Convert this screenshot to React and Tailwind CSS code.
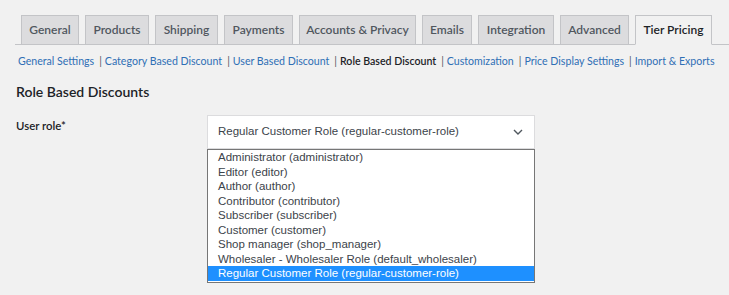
import React from 'react';

const tabs = [
  { label: 'General', w: 'w-[58px]' },
  { label: 'Products', w: 'w-[64px]' },
  { label: 'Shipping', w: 'w-[63px]' },
  { label: 'Payments', w: 'w-[69px]' },
  { label: 'Accounts & Privacy', w: 'w-[117px]' },
  { label: 'Emails', w: 'w-[50px]' },
  { label: 'Integration', w: 'w-[76px]' },
  { label: 'Advanced', w: 'w-[69px]' },
  { label: 'Tier Pricing', w: 'w-[77px]', active: true },
];

const links = [
  'General Settings',
  'Category Based Discount',
  'User Based Discount',
  'Role Based Discount',
  'Customization',
  'Price Display Settings',
  'Import & Exports',
];

const roles = [
  'Administrator (administrator)',
  'Editor (editor)',
  'Author (author)',
  'Contributor (contributor)',
  'Subscriber (subscriber)',
  'Customer (customer)',
  'Shop manager (shop_manager)',
  'Wholesaler - Wholesaler Role (default_wholesaler)',
  'Regular Customer Role (regular-customer-role)',
];

export default function App() {
  const selected = 'Regular Customer Role (regular-customer-role)';

  return (
    <div className="min-h-[295px] bg-[#f1f1f1] font-['Segoe_UI',Lato,sans-serif] text-[#1d2327]">
      <div className="pl-[15px] pt-[15px]">
        {/* Tabs */}
        <nav className="flex gap-[6px] border-b border-[#c3c4c7] pl-[6px]">
          {tabs.map((t) => (
            <div
              key={t.label}
              className={`${t.w} -mb-px flex h-[30px] shrink-0 items-center justify-center whitespace-nowrap border text-[12px] font-semibold ${
                t.active
                  ? 'border-[#c3c4c7] border-b-[#f1f1f1] bg-[#f1f1f1] text-[#1d2327]'
                  : 'border-[#c3c4c7] bg-[#dcdcde] text-[#50575e]'
              }`}
            >
              {t.label}
            </div>
          ))}
        </nav>

        {/* Sub navigation */}
        <div className="mt-[8px] flex whitespace-nowrap pl-[3px] text-[10.6px] leading-[16px]">
          {links.map((l, i) => (
            <span key={l} className="flex">
              <span
                className={
                  l === 'Role Based Discount' ? 'font-semibold text-[#1d2327]' : 'text-[#2f6fb5]'
                }
              >
                {l}
              </span>
              {i < links.length - 1 && (
                <span className="ml-[5px] mr-[3px] text-[#50575e]">|</span>
              )}
            </span>
          ))}
        </div>

        <h2 className="mt-[13px] pl-px text-[14px] font-semibold leading-[20px] text-[#1d2327]">
          Role Based Discounts
        </h2>

        {/* Form row */}
        <div className="mt-[13px] flex">
          <div className="w-[192px] pl-px pt-[3px] text-[11.4px] font-semibold leading-[16px] text-[#1d2327]">
            User role*
          </div>
          <div className="relative w-[328px]">
            <div className="flex h-[34px] items-center justify-between border border-[#dcdcde] bg-white pl-[10px] pr-[10px] font-['Liberation_Sans',Arial,sans-serif] text-[11.5px] text-[#3c434a]">
              <span>{selected}</span>
              <svg width="10" height="6" viewBox="0 0 10 6" className="mr-[1px]">
                <path d="M1 1l4 4 4-4" fill="none" stroke="#50575e" strokeWidth="1.4" />
              </svg>
            </div>
            {/* Open dropdown list */}
            <ul className="absolute left-0 right-0 top-[34px] border border-[#767676] bg-white pb-px font-['Liberation_Sans',Arial,sans-serif] text-[11.5px] leading-[14.5px] text-[#3c434a]">
              {roles.map((r) => (
                <li
                  key={r}
                  className={`pl-[10px] ${r === selected ? 'bg-[#1e90ff] text-white' : ''}`}
                >
                  {r}
                </li>
              ))}
            </ul>
          </div>
        </div>
      </div>
    </div>
  );
}
